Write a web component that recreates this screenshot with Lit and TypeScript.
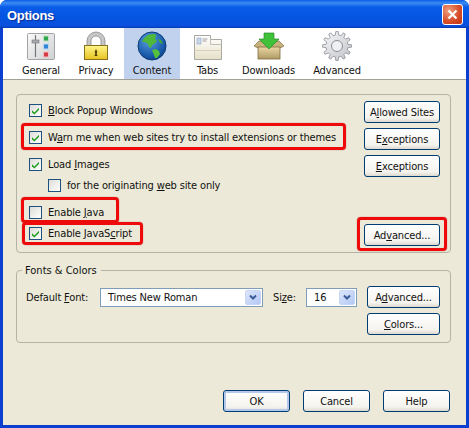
import { LitElement, html, css, svg } from "lit";
import { customElement } from "lit/decorators.js";

const check = svg`<svg class="tick" viewBox="0 0 9 9" width="9" height="9"><path d="M1 4.200 L3.400 6.600 L8 1.800 V4 L3.400 8.600 L1 6.400 Z" fill="#21a121"/></svg>`;

function gearPath(cx: number, cy: number, ro: number, ri: number, teeth: number) {
  const pts: string[] = [];
  for (let i = 0; i < teeth; i++) {
    const a = (i / teeth) * Math.PI * 2;
    const s = (Math.PI * 2) / teeth;
    const add = (r: number, t: number) => pts.push(`${(cx + r * Math.sin(t)).toFixed(2)} ${(cy - r * Math.cos(t)).toFixed(2)}`);
    add(ro, a - s * 0.16);
    add(ro, a + s * 0.16);
    add(ri, a + s * 0.3);
    add(ri, a + s * 0.7);
  }
  return "M" + pts.join("L") + "Z";
}

const icons: Record<string, unknown> = {
  General: svg`<svg width="32" height="32" viewBox="0 0 32 32"><defs><linearGradient id="g1" x1="0" y1="0" x2="1" y2="1"><stop offset="0" stop-color="#fafafa"/><stop offset="1" stop-color="#cfd0d2"/></linearGradient></defs>
    <rect x="2.500" y="3.500" width="27" height="26" rx="1" fill="url(#g1)" stroke="#a4a4a6"/>
    <path d="M10.500 5v22" stroke="#77787c" stroke-width="1.200"/>
    <rect x="7" y="10" width="7" height="3" fill="#a8a9ad" stroke="#77787c" stroke-width=".6"/>
    <rect x="18.500" y="6" width="5" height="5" fill="#2fa84b" stroke="#bfe0c4"/>
    <rect x="18.500" y="14" width="5" height="5" fill="#2f86d6" stroke="#bcd7ef"/>
    <rect x="18.500" y="22" width="5" height="5" fill="#d43a44" stroke="#efc0c4"/></svg>`,
  Privacy: svg`<svg width="32" height="32" viewBox="0 0 32 32"><defs><linearGradient id="g2" x1="0" y1="0" x2="0" y2="1"><stop offset="0" stop-color="#fff68a"/><stop offset="1" stop-color="#e6c21e"/></linearGradient></defs>
    <path d="M7 16V11a9 9 0 0 1 18 0v5h-4V11a5 5 0 0 0-10 0v5z" fill="#c6c6c6" stroke="#8c8c8c" stroke-width=".8"/>
    <rect x="4.500" y="15.500" width="23" height="14" fill="url(#g2)" stroke="#86701a"/>
    <path d="M16 19l1.500 3-.8 1 .8 3h-3l.8-3-.8-1z" fill="#5c4300"/></svg>`,
  Content: svg`<svg width="32" height="32" viewBox="0 0 32 32"><defs><radialGradient id="g3" cx=".4" cy=".3" r=".8"><stop offset="0" stop-color="#5aa0e0"/><stop offset=".7" stop-color="#1758a8"/><stop offset="1" stop-color="#0b3a7a"/></radialGradient></defs>
    <circle cx="16" cy="16" r="14" fill="url(#g3)" stroke="#0e3c78"/>
    <path d="M6 12c2-5 6-8 11-8 2 0 4 1 3 2l-1 3 2 2-3 3-2 1-1 3-2-1-1-3-3-2z" fill="#4fb83a"/>
    <path d="M16 20l4-1 3 2 1 3-3 4-2 0-1-3z" fill="#55c03c"/>
    <path d="M22 9l3 1 2 4-3-1z" fill="#3fa832"/></svg>`,
  Tabs: svg`<svg width="32" height="32" viewBox="0 0 32 32"><defs><linearGradient id="g4" x1="0" y1="0" x2="0" y2="1"><stop offset="0" stop-color="#fff"/><stop offset="1" stop-color="#e6e0c8"/></linearGradient></defs>
    <path d="M2.500 29.500V5.500h16v4h11v20z" fill="url(#g4)" stroke="#a8a8a0"/>
    <path d="M18.500 9.500v5h11" fill="none" stroke="#c0c0b8"/>
    <path d="M2.500 20.500h27" stroke="#d8d2b8"/>
    <rect x="5" y="8" width="4" height="6" fill="#c8d6ea" stroke="#8ea4c4" stroke-width=".6"/>
    <path d="M10.500 9h5M10.500 11h4" stroke="#a0a0a0"/></svg>`,
  Downloads: svg`<svg width="32" height="32" viewBox="0 0 32 32"><defs><linearGradient id="g5" x1="0" y1="0" x2="0" y2="1"><stop offset="0" stop-color="#e8d6a4"/><stop offset="1" stop-color="#b09a64"/></linearGradient></defs>
    <path d="M1 16l5-5h20l5 5-4 2H5z" fill="#c6b27a" stroke="#7f6d40" stroke-width=".7"/>
    <rect x="5" y="17" width="22" height="12" fill="url(#g5)" stroke="#7f6d40" stroke-width=".8"/>
    <path d="M11 3h10v6h5L16 19 6 9h5z" fill="#3fc13a" stroke="#2a8d2a" stroke-width=".7"/></svg>`,
  Advanced: svg`<svg width="32" height="32" viewBox="0 0 32 32"><defs><linearGradient id="g6" x1="0" y1="0" x2="1" y2="1"><stop offset="0" stop-color="#f8f8fa"/><stop offset="1" stop-color="#c0c2c8"/></linearGradient></defs>
    <path d="${gearPath(16, 16, 14.5, 11, 12)}" fill="url(#g6)" stroke="#8c8e94" stroke-width=".8" stroke-linejoin="round"/>
    <circle cx="16" cy="16" r="5.500" fill="#f0f0f2" stroke="#8c8e94"/></svg>`,
};

@customElement("app-root")
export class AppRoot extends LitElement {
  static styles = css`
    :host { display: block; width: 469px; height: 428px; font-family: "DejaVu Sans", sans-serif; font-size: 11px; color: #111; }
    * { box-sizing: border-box; }
    .win { width: 469px; height: 428px; display: flex; flex-direction: column; background: #0a3fd0; border-radius: 7px 7px 0 0; overflow: hidden; }
    .title { height: 28px; flex: none; display: flex; align-items: center; justify-content: space-between; padding: 3px 6px 2px 7px; color: #fff; font: bold 13px/1 "Liberation Sans", sans-serif; letter-spacing: -.3px; text-shadow: 1px 1px 1px #0a2a90; background: linear-gradient(#0a5ce6 0, #3c8cf4 3px, #0a5ce8 7px, #0553e0 20px, #0a4fdc 26px, #0338b0 100%); }
    .title span { margin-top: 2px; }
    .close { width: 21px; height: 21px; border: 1px solid #fff; border-radius: 3px; background: radial-gradient(circle at 30% 30%, #f0a080, #d8502c 55%, #c03010); display: flex; align-items: center; justify-content: center; }
    .frame { flex: 1; margin: 0 3px 3px 3px; display: flex; flex-direction: column; background: #ece9d8; min-height: 0; }
    .tools { height: 52px; flex: none; background: #fff; border-bottom: 1px solid #a3a197; display: grid; grid-template-columns: 54px 56px 56px 55px 67px 70px; padding-left: 11px; }
    .tool { display: flex; flex-direction: column; align-items: center; padding-top: 2px; white-space: nowrap; }
    .tool span { margin-top: 2px; }
    .tool svg { flex: none; }
    .tool.sel { background: #c1d2ee; }
    .tool, .rowc, .btn, .legend, .lbl, .sel-box { font-family: "DejaVu Sans", sans-serif; font-size: 11px; font-stretch: condensed; letter-spacing: -.15px; }
    .body { flex: 1; padding: 14px 15px 0 13px; display: flex; flex-direction: column; position: relative; }
    .group { border: 1px solid #b5b3a6; border-radius: 4px; }
    .g1 { height: 159px; padding: 5px 10px 0 12px; display: grid; grid-template-columns: 1fr 76px; }
    .col { display: flex; flex-direction: column; }
    .rowc { display: flex; align-items: center; gap: 6px; height: 21px; white-space: nowrap; }
    .box { width: 13px; height: 13px; flex: none; border: 1px solid #1c5180; background: linear-gradient(135deg, #dcdcd7, #fff); display: flex; align-items: center; justify-content: center; }
    .gap { margin-bottom: 6px; }
    .sub { padding-left: 19px; }
    .mark { position: absolute; border: 3px solid #ee0a0a; border-radius: 4px; box-shadow: 0 0 1px #a02020; pointer-events: none; }
    .btns { display: flex; flex-direction: column; gap: 5px; padding-top: 1px; }
    .btn { height: 22px; border: 1px solid #003c74; border-radius: 3px; background: linear-gradient(#fff, #f4f3ee 80%, #dcd8ce); line-height: 21px; text-align: center; white-space: nowrap; }
    .adv { margin-top: 42px; }
    .g2wrap { margin-top: 17px; position: relative; }
    .g2 { height: 73px; padding: 15px 10px 0 9px; display: grid; grid-template-columns: 64px 163px 23px 51px 73px; column-gap: 10px; align-items: start; }
    .legend { position: absolute; left: 6px; top: -6px; background: #ece9d8; padding: 0 4px 0 3px; line-height: 13px; letter-spacing: 0; }
    .lbl { line-height: 19px; margin-top: 2px; white-space: nowrap; }
    .sel-box { height: 19px; margin-top: 2px; border: 1px solid #7f9db9; background: #fff; display: flex; align-items: center; justify-content: space-between; padding: 1px; line-height: 15px; }
    .sel-box span { padding-left: 6px; }
    .arrow { width: 16px; height: 15px; flex: none; border-radius: 2px; background: linear-gradient(135deg, #dce6fb, #b4c8f5); display: flex; align-items: center; justify-content: center; border: 1px solid #c8d6f6; }
    .rbtns { display: flex; flex-direction: column; gap: 5px; }
    .foot { position: absolute; right: 16px; bottom: 13px; display: flex; gap: 13px; }
    .fbtn { width: 67px; }
    .ok { box-shadow: inset 0 0 0 2px #b3c8ea; }
  `;

  private arrow() {
    return html`<div class="arrow"><svg width="8" height="7" viewBox="0 0 8 7"><path d="M1 1.500 L4 4.500 L7 1.500" fill="none" stroke="#3a5a9a" stroke-width="2"/></svg></div>`;
  }

  private box(on: boolean) {
    return html`<div class="box">${on ? check : ""}</div>`;
  }

  render() {
    return html`<div class="win">
      <div class="title"><span>Options</span>
        <div class="close"><svg width="11" height="11" viewBox="0 0 11 11"><path d="M1.500 1.500 L9.500 9.500 M9.500 1.500 L1.500 9.500" stroke="#fff" stroke-width="2.200"/></svg></div>
      </div>
      <div class="frame">
        <div class="tools">
          <div class="tool">${icons.General}<span>General</span></div>
          <div class="tool">${icons.Privacy}<span>Privacy</span></div>
          <div class="tool sel">${icons.Content}<span>Content</span></div>
          <div class="tool">${icons.Tabs}<span>Tabs</span></div>
          <div class="tool">${icons.Downloads}<span>Downloads</span></div>
          <div class="tool">${icons.Advanced}<span>Advanced</span></div>
        </div>
        <div class="body">
          <div class="group g1">
            <div class="col">
              <div class="rowc gap">${this.box(true)}<span><u>B</u>lock Popup Windows</span></div>
              <div class="rowc gap">${this.box(true)}<span>W<u>a</u>rn me when web sites try to install extensions or themes</span></div>
              <div class="rowc">${this.box(true)}<span>Load <u>I</u>mages</span></div>
              <div class="rowc sub gap">${this.box(false)}<span>for the originating <u>w</u>eb site only</span></div>
              <div class="rowc">${this.box(false)}<span>Enable <u>J</u>ava</span></div>
              <div class="rowc">${this.box(true)}<span>Enable JavaS<u>c</u>ript</span></div>
            </div>
            <div class="btns">
              <div class="btn">A<u>l</u>lowed Sites</div>
              <div class="btn">E<u>x</u>ceptions</div>
              <div class="btn"><u>E</u>xceptions</div>
              <div class="btn adv">Ad<u>v</u>anced...</div>
            </div>
          </div>
          <div class="g2wrap">
            <div class="group g2">
              <div class="lbl">Default <u>F</u>ont:</div>
              <div class="sel-box"><span>Times New Roman</span>${this.arrow()}</div>
              <div class="lbl">Si<u>z</u>e:</div>
              <div class="sel-box"><span>16</span>${this.arrow()}</div>
              <div class="rbtns">
                <div class="btn">A<u>d</u>vanced...</div>
                <div class="btn"><u>C</u>olors...</div>
              </div>
            </div>
            <div class="legend">Fonts &amp; Colors</div>
          </div>
          <div class="mark" style="left:18px;top:43px;width:325px;height:27px"></div>
          <div class="mark" style="left:18px;top:117px;width:98px;height:26px"></div>
          <div class="mark" style="left:19px;top:142px;width:121px;height:23px"></div>
          <div class="mark" style="left:354px;top:137px;width:90px;height:34px"></div>
          <div class="foot">
            <div class="btn fbtn ok">OK</div>
            <div class="btn fbtn">Cancel</div>
            <div class="btn fbtn">Help</div>
          </div>
        </div>
      </div>
    </div>`;
  }
}
